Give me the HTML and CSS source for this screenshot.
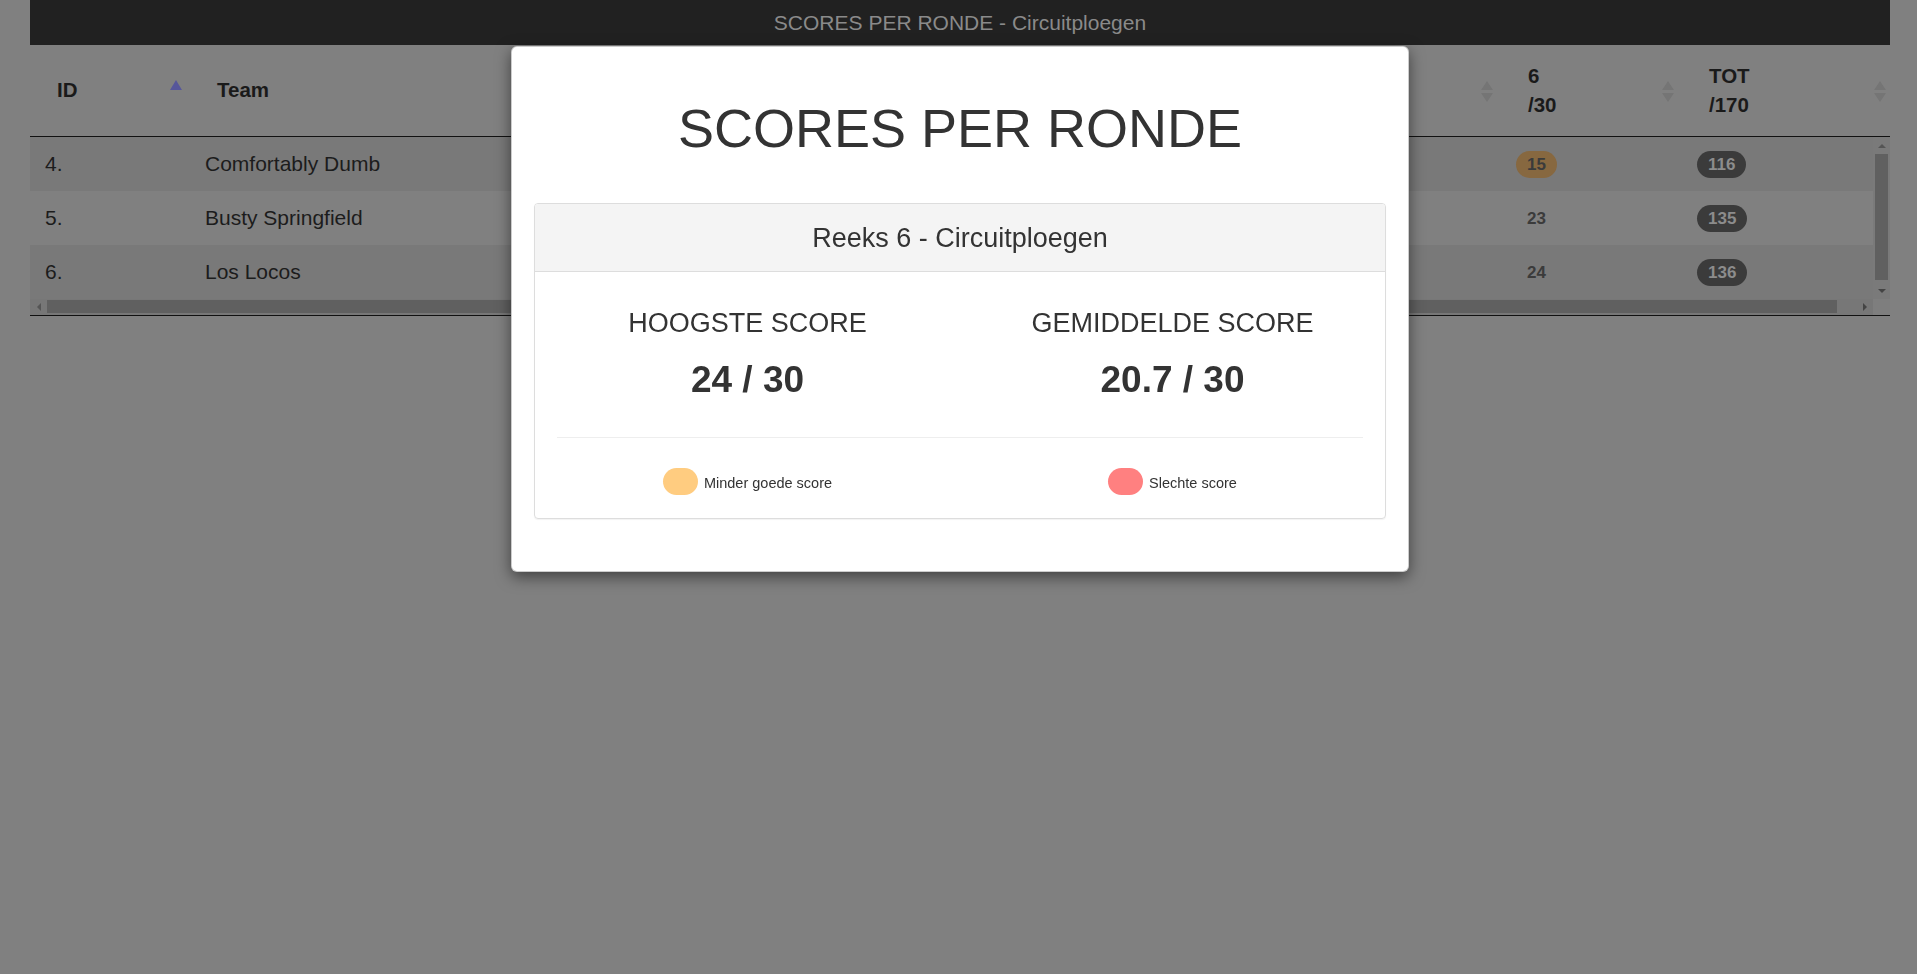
FILE: index.html
```html
<!DOCTYPE html>
<html lang="nl">
<head>
<meta charset="utf-8">
<title>SCORES PER RONDE - Circuitploegen</title>
<link rel="stylesheet" href="styles.css">
</head>
<body>
<div class="page">
  <nav class="navbar">SCORES PER RONDE - Circuitploegen</nav>
  <div class="dt">
    <div class="dt-head">
      <div class="th"><span>ID</span><svg class="sort asc" width="12" height="10" viewBox="0 0 12 10"><path d="M6 0L12 10H0Z" fill="#56569a"/></svg></div>
      <div class="th"><span>Team</span><svg class="sort" width="12" height="21" viewBox="0 0 12 21"><path d="M6 0L12 9H0Z M0 12H12L6 21Z" fill="#757575"/></svg></div>
      <div class="th"><svg class="sort" width="12" height="21" viewBox="0 0 12 21"><path d="M6 0L12 9H0Z M0 12H12L6 21Z" fill="#757575"/></svg></div>
      <div class="th"><svg class="sort" width="12" height="21" viewBox="0 0 12 21"><path d="M6 0L12 9H0Z M0 12H12L6 21Z" fill="#757575"/></svg></div>
      <div class="th"><svg class="sort" width="12" height="21" viewBox="0 0 12 21"><path d="M6 0L12 9H0Z M0 12H12L6 21Z" fill="#757575"/></svg></div>
      <div class="th"><svg class="sort" width="12" height="21" viewBox="0 0 12 21"><path d="M6 0L12 9H0Z M0 12H12L6 21Z" fill="#757575"/></svg></div>
      <div class="th"><svg class="sort" width="12" height="21" viewBox="0 0 12 21"><path d="M6 0L12 9H0Z M0 12H12L6 21Z" fill="#757575"/></svg></div>
      <div class="th"><span>6<br>/30</span><svg class="sort" width="12" height="21" viewBox="0 0 12 21"><path d="M6 0L12 9H0Z M0 12H12L6 21Z" fill="#757575"/></svg></div>
      <div class="th last"><span>TOT<br>/170</span><svg class="sort" width="12" height="21" viewBox="0 0 12 21"><path d="M6 0L12 9H0Z M0 12H12L6 21Z" fill="#757575"/></svg></div>
    </div>
    <div class="dt-body">
      <div class="rows">
        <div class="tr">
          <div class="td">4.</div>
          <div class="td">Comfortably Dumb</div>
          <div class="td"></div>
          <div class="td"></div>
          <div class="td"></div>
          <div class="td"></div>
          <div class="td"></div>
          <div class="td"><span class="badge warn">15</span></div>
          <div class="td"><span class="badge dark">116</span></div>
        </div>
        <div class="tr">
          <div class="td">5.</div>
          <div class="td">Busty Springfield</div>
          <div class="td"></div>
          <div class="td"></div>
          <div class="td"></div>
          <div class="td"></div>
          <div class="td"></div>
          <div class="td"><span class="badge">23</span></div>
          <div class="td"><span class="badge dark">135</span></div>
        </div>
        <div class="tr">
          <div class="td">6.</div>
          <div class="td">Los Locos</div>
          <div class="td"></div>
          <div class="td"></div>
          <div class="td"></div>
          <div class="td"></div>
          <div class="td"></div>
          <div class="td"><span class="badge">24</span></div>
          <div class="td"><span class="badge dark">136</span></div>
        </div>
      </div>
      <div class="vscroll">
        <div class="sb-btn"><span class="tri-up"></span></div>
        <div class="vthumb"></div>
        <div class="vtrack"></div>
        <div class="sb-btn"><span class="tri-down"></span></div>
      </div>
    </div>
    <div class="dt-foot">
      <div class="hscroll">
        <div class="sb-btn-h"><span class="tri-left"></span></div>
        <div class="hthumb"></div>
        <div class="htrack"></div>
        <div class="sb-btn-h"><span class="tri-right"></span></div>
      </div>
      <div class="corner"></div>
    </div>
  </div>
</div>

<div class="overlay">
  <div class="modal">
    <h1 class="modal-title">SCORES PER RONDE</h1>
    <div class="panel">
      <div class="panel-heading">Reeks 6 - Circuitploegen</div>
      <div class="panel-body">
        <div class="stats">
          <div class="stat">
            <h3 class="stat-label">HOOGSTE SCORE</h3>
            <div class="stat-value">24 / 30</div>
          </div>
          <div class="stat">
            <h3 class="stat-label">GEMIDDELDE SCORE</h3>
            <div class="stat-value">20.7 / 30</div>
          </div>
        </div>
        <hr class="divider">
        <div class="legend">
          <div class="legend-item"><span class="pill pill-warn"></span><span class="legend-text">Minder goede score</span></div>
          <div class="legend-item"><span class="pill pill-bad"></span><span class="legend-text">Slechte score</span></div>
        </div>
      </div>
    </div>
  </div>
</div>
</body>
</html>
```
FILE: styles.css
```css
* { box-sizing: border-box; }
html, body { margin: 0; padding: 0; }
body {
  background: #808080;
  font-family: "Liberation Sans", Arial, Helvetica, sans-serif;
  color: #1a1a1a;
  width: 1917px;
  height: 974px;
  overflow: hidden;
}
.page {
  padding-left: 30px;
  width: 1890px;
}
.navbar {
  height: 45px;
  background: #212121;
  color: #8a8a8a;
  font-size: 21px;
  display: flex;
  align-items: center;
  justify-content: center;
}

/* table */
.dt-head {
  display: grid;
  grid-template-columns: 160px 501px repeat(5, 162px) 181px 208px;
  height: 92px;
  border-bottom: 1px solid #111;
}
.th {
  position: relative;
  display: flex;
  align-items: center;
  padding-left: 27px;
  padding-bottom: 2px;
  font-weight: bold;
  font-size: 20.5px;
  line-height: 29px;
  color: #1a1a1a;
}
.th .sort {
  position: absolute;
  right: 8px;
  top: 36px;
}
.th .sort.asc { top: 35px; }
.th.last .sort { right: 4px; }

.dt-body {
  display: flex;
}
.rows {
  width: 1843px;
}
.tr {
  display: grid;
  grid-template-columns: 160px 501px repeat(5, 162px) 181px 191px;
  height: 54px;
  background: #808080;
}
.tr:nth-child(odd) { background: #797979; }
.td {
  display: flex;
  align-items: center;
  padding-left: 15px;
  font-size: 21px;
  color: #1c1c1c;
}
.badge {
  display: inline-block;
  font-size: 17px;
  font-weight: bold;
  line-height: 17px;
  padding: 5px 11px;
  border-radius: 14px;
  color: #3b3b3b;
}
.badge.warn { background: #876840; }
.badge.dark { background: #3b3b3b; color: #8c8c8c; }

/* scrollbars */
.vscroll {
  width: 17px;
  background: #7a7a7a;
  display: flex;
  flex-direction: column;
}
.sb-btn {
  height: 17px;
  display: flex;
  align-items: center;
  justify-content: center;
}
.vthumb {
  height: 126px;
  margin: 0 2px;
  background: #606060;
}
.vtrack { flex: 1; }
.tri-up {
  width: 0; height: 0;
  border-left: 4px solid transparent;
  border-right: 4px solid transparent;
  border-bottom: 4px solid #555;
}
.tri-down {
  width: 0; height: 0;
  border-left: 4px solid transparent;
  border-right: 4px solid transparent;
  border-top: 4px solid #444;
}
.dt-foot {
  display: flex;
  height: 17px;
  border-bottom: 1px solid #111;
}
.hscroll {
  width: 1843px;
  background: #777;
  display: flex;
}
.sb-btn-h {
  width: 17px;
  display: flex;
  align-items: center;
  justify-content: center;
}
.hthumb {
  width: 1790px;
  height: 13px;
  margin-top: 1px;
  background: #606060;
}
.htrack { flex: 1; }
.tri-left {
  width: 0; height: 0;
  border-top: 4px solid transparent;
  border-bottom: 4px solid transparent;
  border-right: 4px solid #555;
}
.tri-right {
  width: 0; height: 0;
  border-top: 4px solid transparent;
  border-bottom: 4px solid transparent;
  border-left: 4px solid #444;
}
.corner {
  width: 17px;
  background: #7e7e7e;
}

/* modal */
.overlay {
  position: fixed;
  inset: 0;
  padding-left: 511px;
  padding-top: 46px;
}
.modal {
  width: 898px;
  background: #fff;
  border: 1px solid rgba(0, 0, 0, 0.2);
  border-radius: 6px;
  box-shadow: 0 5px 15px rgba(0, 0, 0, 0.5);
  padding: 0 22px 52px;
  color: #333;
}
.modal-title {
  margin: 51px 0 45px;
  font-size: 54px;
  line-height: 60px;
  font-weight: normal;
  text-align: center;
  color: #333;
}
.panel {
  border: 1px solid #ddd;
  border-radius: 4px;
  box-shadow: 0 1px 1px rgba(0, 0, 0, 0.05);
}
.panel-heading {
  background: #f4f4f4;
  border-bottom: 1px solid #ddd;
  border-radius: 3px 3px 0 0;
  padding: 19px 15px 18px;
  font-size: 27px;
  line-height: 30px;
  text-align: center;
  color: #333;
}
.panel-body {
  padding: 36px 0 23px;
}
.stats {
  display: grid;
  grid-template-columns: 1fr 1fr;
}
.stat { text-align: center; }
.stat-label {
  margin: 0;
  font-size: 27px;
  line-height: 30px;
  font-weight: normal;
  color: #333;
}
.stat-value {
  margin-top: 21px;
  font-size: 37px;
  line-height: 41px;
  font-weight: bold;
  color: #333;
}
.divider {
  margin: 37px 22px 0;
  border: 0;
  border-top: 1px solid #eee;
  height: 0;
}
.legend {
  margin-top: 30px;
  display: grid;
  grid-template-columns: 1fr 1fr;
}
.legend-item {
  display: flex;
  align-items: center;
  justify-content: center;
  gap: 6px;
  height: 27px;
}
.pill {
  display: inline-block;
  width: 35px;
  height: 27px;
  border-radius: 14px;
}
.pill-warn { background: #ffcc80; }
.pill-bad { background: #ff8080; }
.legend-text {
  font-size: 14.5px;
  color: #333;
  padding-top: 2px;
}
```
